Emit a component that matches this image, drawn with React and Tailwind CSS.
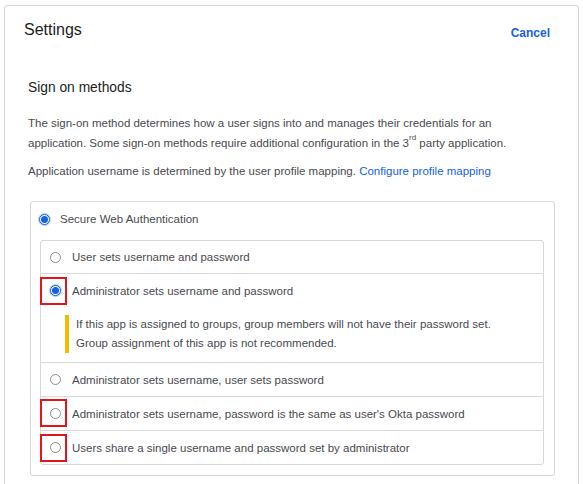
import { useState } from 'react'

const font = { fontFamily: '"Liberation Sans", Arial, sans-serif' }

function Radio({ checked }) {
  if (checked) {
    return (
      <span className="flex h-[11px] w-[11px] shrink-0 items-center justify-center rounded-full border border-[#1662dd] bg-white shadow-[0_0_0_1px_#b9cff5]">
        <span className="h-[7px] w-[7px] rounded-full bg-[#1662dd]" />
      </span>
    )
  }
  return <span className="h-[11px] w-[11px] shrink-0 rounded-full border border-[#8c8c96] bg-white" />
}

// annotation box drawn on top of the radio
function Marker({ top }) {
  return <span className={`pointer-events-none absolute left-[-1px] h-[28px] w-[27px] border-2 border-[#e5141b] ${top}`} />
}

const options = [
  { id: 'user', label: 'User sets username and password' },
  { id: 'admin', label: 'Administrator sets username and password', marked: 'top-[3px]', warning: true },
  { id: 'admin-user', label: 'Administrator sets username, user sets password' },
  { id: 'okta', label: "Administrator sets username, password is the same as user's Okta password", marked: 'top-[2px]' },
  { id: 'shared', label: 'Users share a single username and password set by administrator', marked: 'top-[3px]' },
]

export default function App() {
  const [selected, setSelected] = useState('admin')

  return (
    <div className="h-[484px] w-[583px] overflow-hidden bg-white pl-[4px] pt-[5px]" style={font}>
      <div className="h-[520px] w-[575px] rounded-[3px] border border-[#d4d4d9]">
        <div className="flex items-start justify-between pl-[19px] pr-[28px] pt-[14px]">
          <h1 className="text-[16px] leading-[20px] text-[#1d1d21]">Settings</h1>
          <button className="mt-[5px] text-[12px] font-bold leading-[16px] text-[#1662dd]">Cancel</button>
        </div>

        <div className="px-[23px] pt-[37px]">
          <h2 className="text-[13.8px] leading-[20px] text-[#1d1d21]">Sign on methods</h2>

          <p className="mt-[15px] text-[11.5px] leading-[20px] text-[#4a4a50]">
            The sign-on method determines how a user signs into and manages their credentials for an
            <br />
            application. Some sign-on methods require additional configuration in the 3
            <sup className="align-[3px] text-[8px] leading-none">rd</sup> party application.
          </p>
          <p className="mt-[8px] text-[11.5px] leading-[20px] text-[#4a4a50]">
            Application username is determined by the user profile mapping.{' '}
            <a className="text-[#1662dd]">Configure profile mapping</a>
          </p>

          <div className="ml-[2px] mt-[20px] w-[525px] rounded-[3px] border border-[#d7d7dc] pb-[10px]">
            <label className="flex items-center gap-[10px] pl-[8px] pt-[9px] text-[11.5px] leading-[16px] text-[#4a4a50]">
              <Radio checked />
              Secure Web Authentication
            </label>

            <div className="ml-[9px] mt-[13px] w-[504px] rounded-[3px] border border-[#d7d7dc]">
              {options.map((o, i) => (
                <div
                  key={o.id}
                  className={`relative ${i > 0 ? 'border-t border-[#d7d7dc]' : ''}`}
                  onClick={() => setSelected(o.id)}
                >
                  {o.marked && <Marker top={o.marked} />}
                  <div
                    className={`flex items-center gap-[11px] pl-[9px] text-[11.5px] leading-[16px] text-[#4a4a50] ${
                      i === 0 ? 'h-[32px]' : 'h-[33px]'
                    }`}
                  >
                    <Radio checked={selected === o.id} />
                    {o.label}
                  </div>
                  {o.warning && (
                    <div className="mb-[9px] ml-[24px] mt-[8px] flex">
                      <span className="w-[4px] bg-[#f6bb00]" />
                      <div className="pl-[7px] text-[11.5px] leading-[19px] text-[#4a4a50]">
                        <p>If this app is assigned to groups, group members will not have their password set.</p>
                        <p>Group assignment of this app is not recommended.</p>
                      </div>
                    </div>
                  )}
                </div>
              ))}
            </div>
          </div>
        </div>
      </div>
    </div>
  )
}
